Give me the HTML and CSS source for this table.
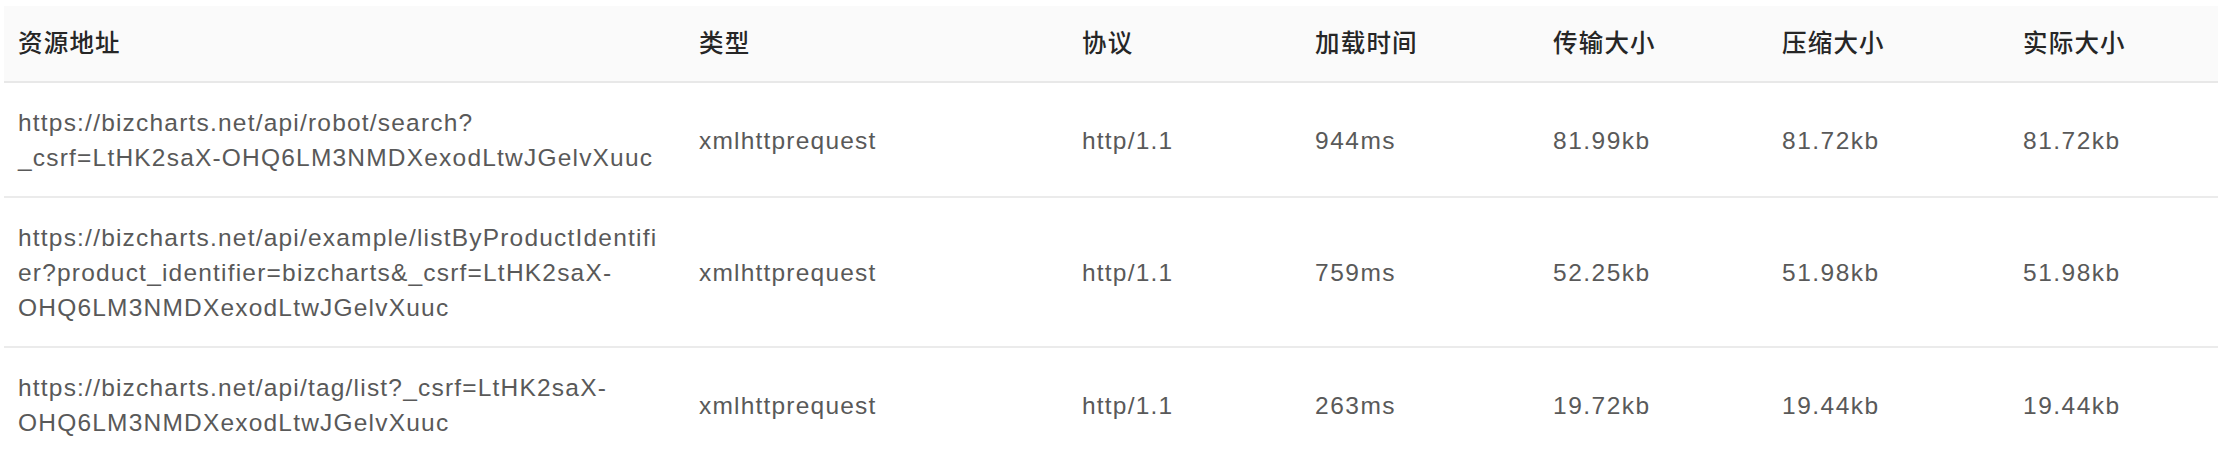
FILE: index.html
```html
<!DOCTYPE html>
<html lang="zh-CN">
<head>
<meta charset="utf-8">
<title>资源列表</title>
<link rel="stylesheet" href="styles.css">
</head>
<body>
<div class="wrap">
  <table class="res-table">
    <colgroup>
      <col class="c-url">
      <col class="c-type">
      <col class="c-proto">
      <col class="c-time">
      <col class="c-trans">
      <col class="c-comp">
      <col class="c-real">
    </colgroup>
    <thead>
      <tr>
        <th>资源地址</th>
        <th>类型</th>
        <th>协议</th>
        <th>加载时间</th>
        <th>传输大小</th>
        <th>压缩大小</th>
        <th>实际大小</th>
      </tr>
    </thead>
    <tbody>
      <tr>
        <td class="url">https://bizcharts.net/api/robot/search?_csrf=LtHK2saX-OHQ6LM3NMDXexodLtwJGelvXuuc</td>
        <td>xmlhttprequest</td>
        <td>http/1.1</td>
        <td class="num">944ms</td>
        <td class="num">81.99kb</td>
        <td class="num">81.72kb</td>
        <td class="num">81.72kb</td>
      </tr>
      <tr>
        <td class="url">https://bizcharts.net/api/example/listByProductIdentifier?product_identifier=bizcharts&amp;_csrf=LtHK2saX-OHQ6LM3NMDXexodLtwJGelvXuuc</td>
        <td>xmlhttprequest</td>
        <td>http/1.1</td>
        <td class="num">759ms</td>
        <td class="num">52.25kb</td>
        <td class="num">51.98kb</td>
        <td class="num">51.98kb</td>
      </tr>
      <tr>
        <td class="url">https://bizcharts.net/api/tag/list?_csrf=LtHK2saX-OHQ6LM3NMDXexodLtwJGelvXuuc</td>
        <td>xmlhttprequest</td>
        <td>http/1.1</td>
        <td class="num">263ms</td>
        <td class="num">19.72kb</td>
        <td class="num">19.44kb</td>
        <td class="num">19.44kb</td>
      </tr>
    </tbody>
  </table>
</div>
</body>
</html>
```

FILE: styles.css
```css
html, body {
  margin: 0;
  padding: 0;
  background: #ffffff;
}

.wrap {
  padding: 6px 0 0 4px;
}

.res-table {
  width: 2214px;
  table-layout: fixed;
  border-collapse: collapse;
  border-spacing: 0;
  font-family: "Liberation Sans", Arial, "Noto Sans CJK SC", sans-serif;
  font-size: 24.5px;
  line-height: 35px;
  letter-spacing: 1.2px;
  color: #595959;
}

.c-url { width: 681px; }
.c-type { width: 383px; }
.c-proto { width: 233px; }
.c-time { width: 238px; }
.c-trans { width: 229px; }
.c-comp { width: 241px; }
.c-real { width: 209px; }

.res-table th {
  background: #fafafa;
  color: #262626;
  font-weight: 500;
  text-align: left;
  padding: 20px 20px 20px 14px;
  border-bottom: 2px solid #e8e8e8;
  vertical-align: middle;
}

.res-table td {
  padding: 22px 20px 21px 14px;
  border-bottom: 2px solid #ebebeb;
  vertical-align: middle;
  overflow-wrap: break-word;
}

.res-table td.num {
  letter-spacing: 1.5px;
}
```
